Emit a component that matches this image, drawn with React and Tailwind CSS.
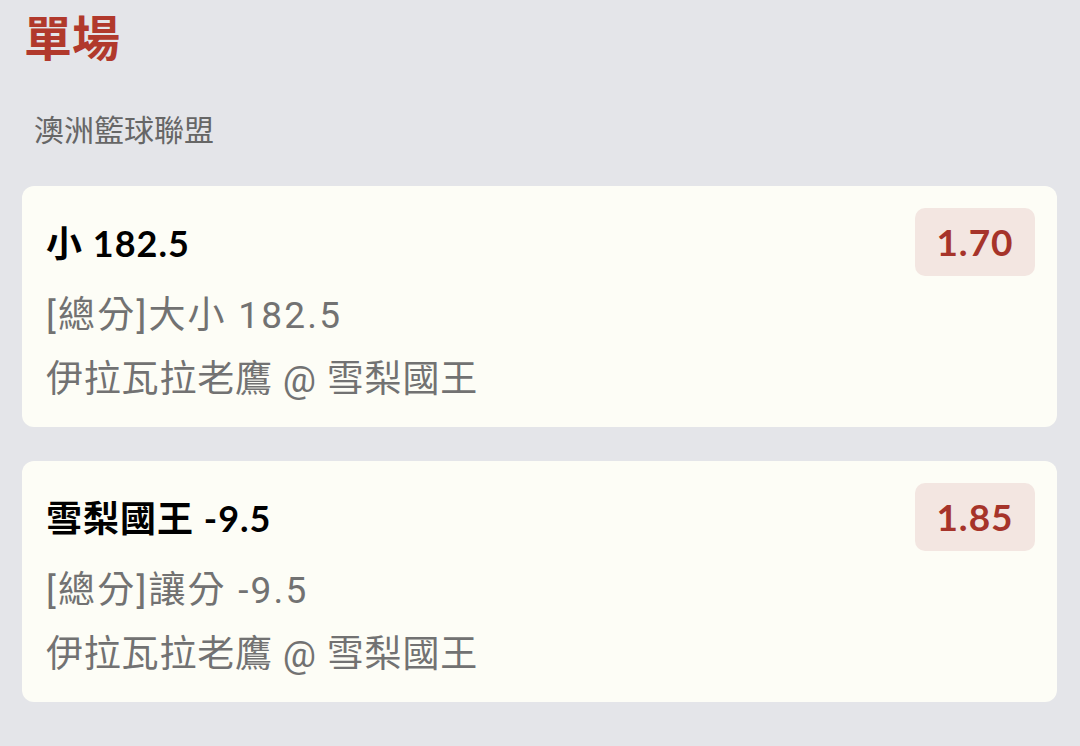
import React from 'react';

const bets = [
  { title: '小 182.5', market: '[總分]大小 182.5', match: '伊拉瓦拉老鷹 @ 雪梨國王', odds: '1.70' },
  { title: '雪梨國王 -9.5', market: '[總分]讓分 -9.5', match: '伊拉瓦拉老鷹 @ 雪梨國王', odds: '1.85' },
];

const BetCard = ({ bet }) => (
  <div className="flex items-start justify-between bg-[#fdfdf6] rounded-[12px] pt-[22px] pl-[24px] pr-[22px] pb-[15px]">
    <div className="pt-[12px]">
      <div className="text-[36px] leading-[46px] font-bold tracking-[1px] text-black">{bet.title}</div>
      <div className="mt-[18px] font-['Roboto','Noto_Sans_CJK_TC',sans-serif] text-[37px] leading-[64px] tracking-[2.2px] text-[#727272]">
        {bet.market}
      </div>
      <div className="font-['Roboto','Noto_Sans_CJK_TC',sans-serif] text-[37px] leading-[64px] tracking-[0.8px] text-[#727272]">
        {bet.match}
      </div>
    </div>
    <div className="w-[120px] h-[68px] rounded-[10px] bg-[#f3e6e1] flex items-center justify-center text-[37px] font-bold tracking-[1px] text-[#a6342a]">
      {bet.odds}
    </div>
  </div>
);

export default function App() {
  return (
    <div className="min-h-screen bg-[#e4e5e9] pt-[9px] pb-[44px] font-['Lato','Noto_Sans_CJK_TC',sans-serif]">
      <h1 className="pl-[24px] text-[48px] leading-[58px] font-bold text-[#b1392c]">單場</h1>
      <div className="mt-[46px] pl-[34px] font-['Roboto','Noto_Sans_CJK_TC',sans-serif] text-[30px] leading-[35px] text-[#666]">
        澳洲籃球聯盟
      </div>
      <div className="mt-[38px] pl-[22px] pr-[23px] flex flex-col gap-[34px]">
        {bets.map((b, i) => (
          <BetCard key={i} bet={b} />
        ))}
      </div>
    </div>
  );
}
